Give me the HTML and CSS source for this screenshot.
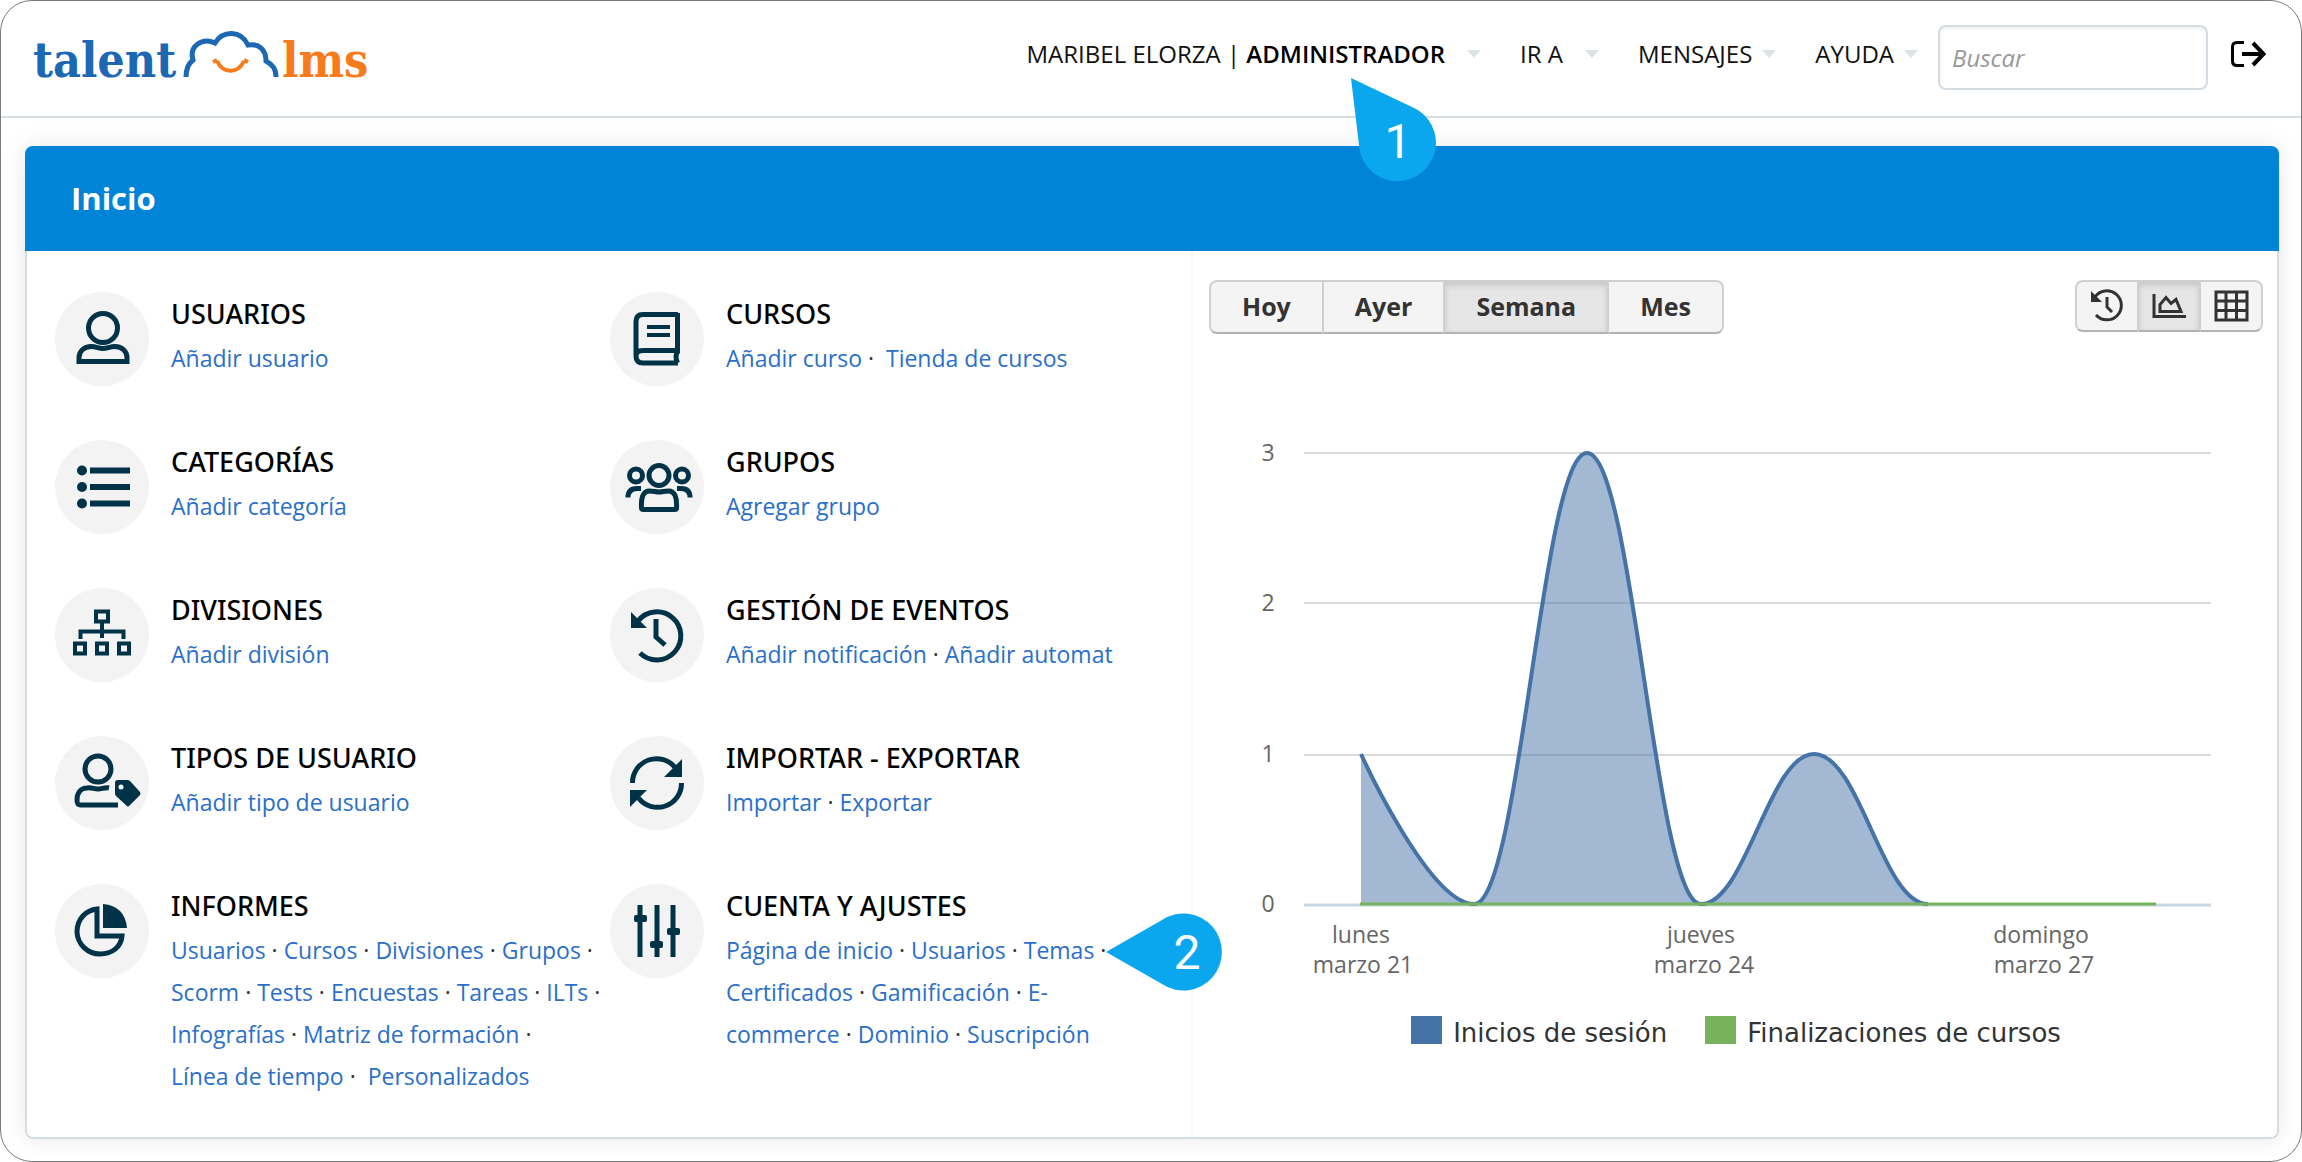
FILE: index.html
```html
<!DOCTYPE html>
<html lang="es">
<head>
<meta charset="utf-8">
<title>TalentLMS - Inicio</title>
<link rel="stylesheet" href="styles.css">
</head>
<body>
<div class="frame">
  <header class="topbar">
    <a class="logo" href="#" aria-label="talentlms">
      <svg width="340" height="74" viewBox="0 0 340 74">
        <text class="logo-word" x="0" y="60" fill="#1c68b3">talent</text>
        <g transform="translate(0 6)" fill="none">
          <path d="M153 54c0-8 2-13 7-17-4-14 9-23 22-17 8-13 26-13 33 2 11-2 18 5 18 16 7 4 10 8 10 16" stroke="#1c68b3" stroke-width="5"/>
          <path d="M180 39l4-2M184 38c6 13 21 13 27 0M211 37l4 2" stroke="#f77b1c" stroke-width="4"/>
        </g>
        <text class="logo-word" x="249" y="60" fill="#f77b1c">lms</text>
      </svg>
    </a>
    <nav class="menu">
      <a class="menu-item" href="#"><span>MARIBEL ELORZA | <b>ADMINISTRADOR</b></span><i class="caret caret-wide"></i></a>
      <a class="menu-item" href="#"><span>IR A</span><i class="caret caret-wide"></i></a>
      <a class="menu-item" href="#"><span>MENSAJES</span><i class="caret"></i></a>
      <a class="menu-item" href="#"><span>AYUDA</span><i class="caret"></i></a>
    </nav>
    <input class="search" type="search" placeholder="Buscar" aria-label="Buscar">
    <a class="logout" href="#" aria-label="Salir">
      <svg width="36" height="28" viewBox="0 0 36 28" fill="none" stroke="#000" stroke-width="3">
        <path d="M14 2.500H7Q2.500 2.500 2.500 7v14q0 4.500 4.500 4.500h7"/>
        <path d="M12 14h21M23 3 33.500 14 23 25" stroke-width="4"/>
      </svg>
    </a>
  </header>

  <main class="card">
    <h1 class="card-title">Inicio</h1>
    <div class="card-body">
      <div class="tiles">
        <section class="tile">
          <span class="disc"><svg viewBox="0 0 94 94"><circle cx="48" cy="36" r="14.500"/><path d="M24 69.500v-4c0-6 5-11 12-11 5 0 8 2 12 2s7-2 12-2c7 0 12 5 12 11v4z"/></svg></span>
          <div class="tile-text"><h2>USUARIOS</h2><p><a href="#">Añadir usuario</a></p></div>
        </section>
        <section class="tile">
          <span class="disc"><svg viewBox="0 0 94 94"><path d="M68 22.500H33q-7 0-7 7V64q0 7 7 7h35M67.500 21v39q-3 4 0 11M26 64q0-5.500 7-5.500h35"/><path d="M37 35h23M37 43h23" stroke-width="4"/></svg></span>
          <div class="tile-text"><h2>CURSOS</h2><p><a href="#">Añadir curso</a> ·&nbsp; <a href="#">Tienda de cursos</a></p></div>
        </section>
        <section class="tile">
          <span class="disc"><svg viewBox="0 0 94 94"><path d="M35 30.500h40M35 47h40M35 63.500h40" stroke-width="6"/><g class="solid"><circle cx="27" cy="30.500" r="5"/><circle cx="27" cy="47" r="5"/><circle cx="27" cy="63.500" r="5"/></g></svg></span>
          <div class="tile-text"><h2>CATEGORÍAS</h2><p><a href="#">Añadir categoría</a></p></div>
        </section>
        <section class="tile">
          <span class="disc"><svg viewBox="0 0 94 94"><circle cx="49" cy="35.500" r="10"/><circle cx="26" cy="35.500" r="6.500"/><circle cx="72" cy="35.500" r="6.500"/><path d="M31.500 68q-1-17 8-17c4 0 6 1 9.500 1s5.500-1 9.500-1q9 0 8 17 0 1.500-2 1.500h-31q-2 0-2-1.500zM18 57.500q0-9 9-9h4M80 57.500q0-9-9-9h-4"/></svg></span>
          <div class="tile-text"><h2>GRUPOS</h2><p><a href="#">Agregar grupo</a></p></div>
        </section>
        <section class="tile">
          <span class="disc"><svg viewBox="0 0 94 94"><path d="M41 23.500h12v10H41zM20 55.500h10v10H20zM42 55.500h10v10H42zM64 55.500h10v10H64zM47 35v15M25.500 51v-7.500h43V51" stroke-width="4"/></svg></span>
          <div class="tile-text"><h2>DIVISIONES</h2><p><a href="#">Añadir división</a></p></div>
        </section>
        <section class="tile">
          <span class="disc"><svg viewBox="0 0 94 94"><path d="M28 33a24 24 0 1 1 2 32M46 31v18l9 8" stroke-width="5"/><path class="solid" d="M21 24v16h16z"/></svg></span>
          <div class="tile-text"><h2>GESTIÓN DE EVENTOS</h2><p><a href="#">Añadir notificación</a> · <a href="#">Añadir automat</a></p></div>
        </section>
        <section class="tile">
          <span class="disc"><svg viewBox="0 0 94 94"><circle cx="43" cy="33" r="13"/><path d="M54 52c-4-1-7 1-11 1s-7-2-11-1c-7 0-10 6-10 12 0 4 1 5 4 5h37"/><path class="solid" d="M60 47q0-3 3-3h9q2 0 3 1l10 11q1 2 0 3L74 70q-1 1-2 0L61 60q-1-1-1-3z"/><circle cx="66" cy="51" r="2.500" fill="#f3f3f3" stroke="none"/></svg></span>
          <div class="tile-text"><h2>TIPOS DE USUARIO</h2><p><a href="#">Añadir tipo de usuario</a></p></div>
        </section>
        <section class="tile">
          <span class="disc"><svg viewBox="0 0 94 94"><path d="M22.500 47a24 24 0 0 1 43-15M71.500 47a24 24 0 0 1-43 15" stroke-width="5"/><path class="solid" d="M72 23v18H54zM20 71V54h17z"/></svg></span>
          <div class="tile-text"><h2>IMPORTAR - EXPORTAR</h2><p><a href="#">Importar</a> · <a href="#">Exportar</a></p></div>
        </section>
        <section class="tile">
          <span class="disc"><svg viewBox="0 0 94 94"><path d="M42 25v27h25c-1 11-10 18-22 18a23 23 0 0 1-23-22c0-13 9-22 20-23z"/><path class="solid" d="M48 20q22 2 24 24H48z"/></svg></span>
          <div class="tile-text"><h2>INFORMES</h2><p><a href="#">Usuarios</a> · <a href="#">Cursos</a> · <a href="#">Divisiones</a> · <a href="#">Grupos</a> · <a href="#">Scorm</a> · <a href="#">Tests</a> · <a href="#">Encuestas</a> · <a href="#">Tareas</a> · <a href="#">ILTs</a>&nbsp;· <a href="#">Infografías</a> · <a href="#">Matriz de formación</a> · <a href="#">Línea&nbsp;de&nbsp;tiempo</a> ·&nbsp; <a href="#">Personalizados</a></p></div>
        </section>
        <section class="tile">
          <span class="disc"><svg viewBox="0 0 94 94"><path d="M30 21v52M47 21v52M63 21v52" stroke-width="5"/><g class="solid"><rect x="24" y="31" width="13" height="7" rx="2"/><rect x="40" y="57" width="13" height="7" rx="2"/><rect x="57" y="44" width="13" height="7" rx="2"/></g></svg></span>
          <div class="tile-text"><h2>CUENTA Y AJUSTES</h2><p><a href="#">Página de inicio</a> · <a href="#">Usuarios</a> · <a href="#">Temas</a> · <a href="#">Certificados</a> · <a href="#">Gamificación</a> · <a href="#">E-commerce</a> · <a href="#">Dominio</a> · <a href="#">Suscripción</a></p></div>
        </section>
      </div>

      <div class="stats">
        <div class="toolbar">
          <div class="btn-group">
            <button type="button">Hoy</button><button type="button">Ayer</button><button type="button" class="on" aria-pressed="true">Semana</button><button type="button">Mes</button>
          </div>
          <div class="btn-group btn-icons">
            <button type="button" aria-label="Historial"><svg width="36" height="36" viewBox="0 0 36 36"><path d="M6 9a14.500 14.500 0 1 1 1 18M18 9v10l5 5"/><path class="ink" d="M2 3v11h11z"/></svg></button><button type="button" class="on" aria-pressed="true" aria-label="Gráfico"><svg width="36" height="36" viewBox="0 0 36 36"><path d="M3 6v22.500h32"/><path d="M9 23.500v-7l6-7 5 6 5-4 5 12z"/></svg></button><button type="button" aria-label="Tabla"><svg width="36" height="36" viewBox="0 0 36 36"><path d="M3 4h31v28H3zM3 13h31M3 22.500h31M13 4v28M23.500 4v28"/></svg></button>
          </div>
        </div>
        <svg class="chart" viewBox="0 0 1054 580" role="img" aria-label="Inicios de sesión y finalizaciones de cursos">
          <g stroke="#dadada" stroke-width="2"><path d="M95 33h907M95 183h907M95 335h907"/></g>
          <path d="M95 485h907" stroke="#c8d6e2" stroke-width="3"/>
          <path d="M152 334C152 334 220 484 265 484C311 484 333 33 378 33C424 33 446 484 492 484C537 484 560 334 605 334C651 334 673 484 719 484H152z" fill="#4572a7" fill-opacity=".5"/>
          <path d="M152 334C152 334 220 484 265 484C311 484 333 33 378 33C424 33 446 484 492 484C537 484 560 334 605 334C651 334 673 484 719 484" fill="none" stroke="#4572a7" stroke-width="4"/>
          <path d="M151 484h796" stroke="#77b35a" stroke-width="3"/>
          <g class="axis" text-anchor="middle">
            <text x="59" y="41">3</text><text x="59" y="191">2</text><text x="59" y="342">1</text><text x="59" y="492">0</text>
            <text x="152" y="523">lunes</text><text x="154" y="553">marzo 21</text>
            <text x="492" y="523">jueves</text><text x="495" y="553">marzo 24</text>
            <text x="832" y="523">domingo</text><text x="835" y="553">marzo 27</text>
          </g>
        </svg>
        <ul class="legend">
          <li><i class="swatch swatch-blue"></i>Inicios de sesión</li>
          <li><i class="swatch swatch-green"></i>Finalizaciones de cursos</li>
        </ul>
      </div>
    </div>
  </main>

  <svg class="pin pin-one" width="88" height="104" viewBox="0 0 88 104"><path d="M1 0 62 29A38.500 38.500 0 1 1 9 67z"/><text x="48" y="80" text-anchor="middle">1</text></svg>
  <svg class="pin pin-two" width="118" height="78" viewBox="0 0 118 78"><path d="M0 39 56 7A38.500 38.500 0 1 1 56 71z"/><text x="81" y="56" text-anchor="middle">2</text></svg>
</div>
</body>
</html>
```
FILE: styles.css
```css
* { box-sizing: border-box; }

body {
  margin: 0;
  background: #fff;
  color: #333;
  font: 23px/42px "Open Sans", "Noto Sans", sans-serif;
}

a { color: #2a6fca; text-decoration: none; }

.frame {
  position: relative;
  min-height: 100vh;
  padding-bottom: 20px;
  border: 1px solid #7a7a7a;
  border-radius: 32px;
}

/* Top bar */
.topbar {
  display: flex;
  align-items: center;
  height: 117px;
  padding: 0 35px 10px 32px;
  border-bottom: 2px solid #d8e0e6;
}

.logo { display: flex; }
.logo-word { font: bold 48px "DejaVu Serif Condensed", "DejaVu Serif", serif; }

.menu {
  display: flex;
  gap: 39px;
  margin-left: auto;
  font-size: 24px;
}
.menu-item {
  display: flex;
  align-items: center;
  gap: 10px;
  color: #111;
}
.menu-item b { color: #000; font-weight: 600; }

.caret {
  border: 7px solid transparent;
  border-top: 8px solid #dce3e8;
  border-bottom: 0;
}
.caret-wide { margin-left: 12px; }

.search {
  width: 270px;
  height: 65px;
  margin: 8px 22px 0 20px;
  padding: 0 12px;
  border: 2px solid #d3dce2;
  border-radius: 8px;
  box-shadow: inset 0 2px 3px #00000012;
  font: italic 24px "Open Sans", sans-serif;
}
.search::placeholder { color: #999; }

.logout { display: flex; }

/* Card */
.card {
  margin: 28px 22px 0 24px;
  border: 2px solid #d3dee4;
  border-top: 0;
  border-radius: 8px;
  box-shadow: 0 0 24px #00000018;
}
.card-title {
  margin: 0 -2px;
  padding: 0 46px;
  border-radius: 8px 8px 0 0;
  background: #0084d8;
  color: #fff;
  font-size: 31px;
  font-weight: 700;
  line-height: 105px;
}
.card-body {
  display: grid;
  grid-template-columns: 1164px 1fr;
  background: #fff;
  border-radius: 0 0 8px 8px;
}

/* Tiles */
.tiles {
  display: grid;
  grid-template-columns: 555px 1fr;
  grid-auto-rows: minmax(148px, auto);
  padding: 41px 0 40px 28px;
}
.tile { display: flex; gap: 22px; }
.disc {
  flex: none;
  width: 94px;
  height: 94px;
  border-radius: 50%;
  background: #f3f3f3;
}
.disc svg {
  display: block;
  fill: none;
  stroke: #003347;
  stroke-width: 5;
}
.disc .solid { fill: #003347; stroke: none; }
.tile-text { flex: 1; max-width: 430px; }
.tile-text h2 {
  margin: 0 0 2px;
  color: #000;
  font: 500 27px/43px "Noto Sans", "Open Sans", sans-serif;
}
.tile-text p { margin: 0; }

/* Statistics */
.stats {
  padding: 29px 14px 0 16px;
  border-left: 2px solid #f4f6f7;
}
.toolbar { display: flex; justify-content: space-between; align-items: flex-start; }
.btn-group { display: flex; }
.btn-group button {
  height: 54px;
  padding: 0 31px 2px;
  border: 2px solid #d0d0d0;
  border-left-width: 0;
  border-bottom-color: #b3b3b3;
  background: #f4f4f4;
  color: #333;
  font: 700 25px "Open Sans", sans-serif;
}
.btn-group button:first-child { border-left-width: 2px; border-radius: 8px 0 0 8px; }
.btn-group button:last-child { border-radius: 0 8px 8px 0; }
.btn-group .on { background: #e6e6e6; box-shadow: inset 0 3px 6px #00000026; }
.btn-icons button { height: 52px; padding: 0 12px; }
.btn-icons svg { display: block; fill: none; stroke: #333; stroke-width: 3; }
.btn-icons .ink { fill: #333; stroke: none; }

.chart { display: block; width: 100%; margin-top: 86px; }
.axis { fill: #666; font: 23px "Open Sans", sans-serif; }

.legend {
  display: flex;
  justify-content: center;
  gap: 38px;
  margin: 16px 0 0;
  padding: 0;
  list-style: none;
  font: 26px/34px "DejaVu Sans", sans-serif;
}
.legend li { display: flex; gap: 11px; }
.swatch { width: 31px; height: 28px; }
.swatch-blue { background: #4572a7; }
.swatch-green { background: #77b35a; }

/* Numbered pointers over the page */
.pin { position: absolute; fill: #0aa6ee; }
.pin text { fill: #fff; font: 48px Roboto, sans-serif; }
.pin-one { left: 1349px; top: 77px; }
.pin-two { left: 1105px; top: 912px; }
```
